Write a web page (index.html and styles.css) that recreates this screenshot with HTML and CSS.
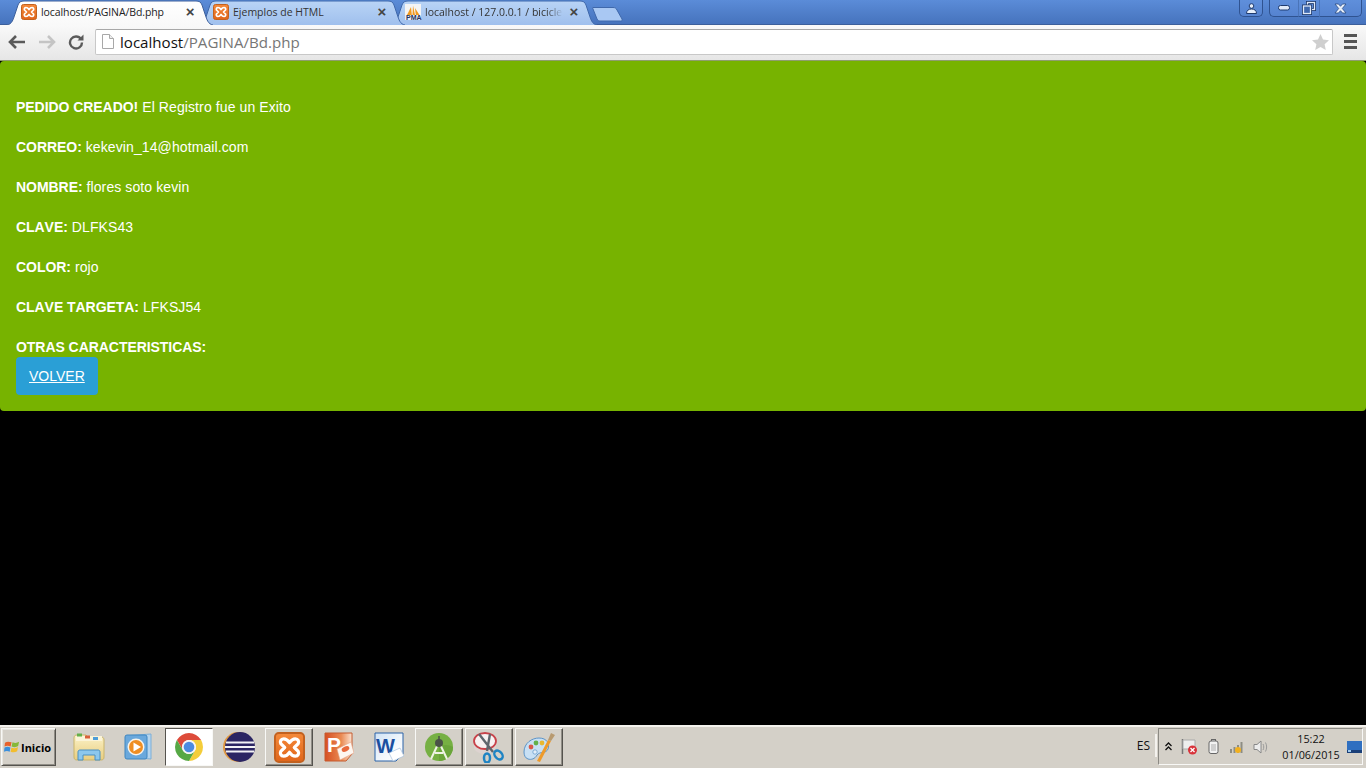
FILE: index.html
```html
<!DOCTYPE html>
<html lang="es">
<head>
<meta charset="utf-8">
<title>localhost/PAGINA/Bd.php</title>
<link rel="stylesheet" href="styles.css">
</head>
<body>
<svg class="defs" width="0" height="0" aria-hidden="true">
  <defs>
    <linearGradient id="tabOn" x1="0" y1="0" x2="0" y2="1"><stop offset="0" stop-color="#ffffff"/><stop offset="1" stop-color="#f8f8f8"/></linearGradient>
    <linearGradient id="tabOff" x1="0" y1="0" x2="0" y2="1"><stop offset="0" stop-color="#b9d4f6"/><stop offset="1" stop-color="#9cbdec"/></linearGradient>
    <linearGradient id="xamppG" x1="0" y1="0" x2="0" y2="1"><stop offset="0" stop-color="#f58a3a"/><stop offset="1" stop-color="#e0651a"/></linearGradient>
    <linearGradient id="pptG" x1="0" y1="0" x2="1" y2="0"><stop offset="0" stop-color="#d64f22"/><stop offset=".6" stop-color="#ea8a52"/><stop offset="1" stop-color="#fbe3d2"/></linearGradient>
    <linearGradient id="wordG" x1="0" y1="0" x2="1" y2="1"><stop offset="0" stop-color="#cfe2f5"/><stop offset=".6" stop-color="#f4f8fc"/><stop offset="1" stop-color="#ffffff"/></linearGradient>
    <linearGradient id="folderG" x1="0" y1="0" x2="0" y2="1"><stop offset="0" stop-color="#fbf2c8"/><stop offset="1" stop-color="#e9cd7f"/></linearGradient>
    <symbol id="tabShape" viewBox="0 0 206 25">
      <path d="M0 25C5 24 6 20 8 14L11 5C12 2 14 1 17 1L189 1C192 1 194 2 195 5L198 14C200 20 201 24 206 25V28H0Z"/>
    </symbol>
    <symbol id="xampp" viewBox="0 0 16 16">
      <rect x=".5" y=".5" width="15" height="15" rx="2" fill="url(#xamppG)" stroke="#c2611f"/>
      <path d="M5 3.500C3.500 3.500 3 5 3.500 6L5.500 8L3.500 10C3 11 3.500 12.500 5 12.500C6.500 12.500 7 12 8 10.500C9 12 9.500 12.500 11 12.500C12.500 12.500 13 11 12.500 10L10.500 8L12.500 6C13 5 12.500 3.500 11 3.500C9.500 3.500 9 4 8 5.500C7 4 6.500 3.500 5 3.500Z" fill="none" stroke="#fff" stroke-width="1.700" stroke-linejoin="round"/>
    </symbol>
  </defs>
</svg>

<header class="tabbar">
  <div class="tabs">
    <div class="tab tab-active">
      <svg class="tab-bg"><use href="#tabShape"/></svg>
      <svg class="favicon"><use href="#xampp"/></svg>
      <span class="tab-title">localhost/PAGINA/Bd.php</span>
      <span class="tab-close">×</span>
    </div>
    <div class="tab tab-mid">
      <svg class="tab-bg"><use href="#tabShape"/></svg>
      <svg class="favicon"><use href="#xampp"/></svg>
      <span class="tab-title">Ejemplos de HTML</span>
      <span class="tab-close">×</span>
    </div>
    <div class="tab tab-last">
      <svg class="tab-bg"><use href="#tabShape"/></svg>
      <svg class="favicon" viewBox="0 0 16 16">
        <rect width="16" height="16" fill="#f4f4f4"/>
        <path d="M2 11L6 3L6.800 11ZM7.500 11L8 1.500L10 11ZM10.800 11L10 4L14.500 11Z" fill="#f29a1f"/>
        <rect x="0" y="11" width="16" height="5" fill="#e9eef6"/>
      </svg>
      <span class="pma">PMA</span>
      <span class="tab-title tab-fade">localhost / 127.0.0.1 / bicicle</span>
      <span class="tab-close">×</span>
    </div>
    <svg class="newtab" width="32" height="16" viewBox="0 0 32 16">
      <path d="M1 1.500H21C23 1.500 24 2 25 4L30 13C30.500 14.500 30 15 28.500 15H8C6.500 15 6 14.500 5 13L1 3C.5 2 .5 1.500 1 1.500Z" fill="#a9c8f3" stroke="#3f68ab"/>
    </svg>
  </div>
  <div class="winctl">
    <div class="winbtn winbtn-user">
      <svg width="13" height="11" viewBox="0 0 13 11"><circle cx="6.500" cy="3" r="2.300" fill="#e8f0fb" stroke="#1e3a6e"/><path d="M1.500 10.500C1.500 7.500 3.500 6 6.500 6S11.500 7.500 11.500 10.500Z" fill="#e8f0fb" stroke="#1e3a6e"/></svg>
    </div>
    <div class="wingroup">
      <div class="winbtn winbtn-min"><svg width="12" height="6" viewBox="0 0 12 6"><rect x=".5" y=".5" width="11" height="4.500" rx="2" fill="#dfe9f8" stroke="#1e3a6e"/></svg></div>
      <div class="winbtn winbtn-max"><svg width="14" height="14" viewBox="0 0 14 14"><rect x="5.500" y="1.500" width="7" height="7" fill="none" stroke="#1e3a6e" stroke-width="3"/><rect x="5.500" y="1.500" width="7" height="7" fill="none" stroke="#dfe9f8" stroke-width="1.300"/><rect x="1.500" y="5" width="7" height="7.500" fill="#5d8ad2" stroke="#1e3a6e" stroke-width="3"/><rect x="1.500" y="5" width="7" height="7.500" fill="#3e68ae" stroke="#dfe9f8" stroke-width="1.300"/></svg></div>
      <div class="winbtn winbtn-close"><svg width="13" height="11" viewBox="0 0 13 11"><path d="M1 1H4.500L6.500 3.300L8.500 1H12L8.300 5.500L12 10H8.500L6.500 7.700L4.500 10H1L4.700 5.500Z" fill="#e8f0fb" stroke="#2a4a82" stroke-width=".8"/></svg></div>
    </div>
  </div>
</header>

<nav class="toolbar">
  <svg class="navicon" width="18" height="14" viewBox="0 0 18 14"><path d="M8 1L2 7L8 13M2.500 7H17" fill="none" stroke="#5a5a5a" stroke-width="2.600"/></svg>
  <svg class="navicon navicon-fwd" width="18" height="14" viewBox="0 0 18 14"><path d="M10 1L16 7L10 13M15.500 7H1" fill="none" stroke="#c4c4c4" stroke-width="2.600"/></svg>
  <svg class="navicon navicon-reload" width="16" height="16" viewBox="0 0 16 16"><path d="M13 5.200A6 6 0 1 0 14 8.500" fill="none" stroke="#5a5a5a" stroke-width="2.400"/><path d="M9.500 6.500H15.500V.5Z" fill="#5a5a5a"/></svg>
  <div class="omnibox">
    <svg class="pageicon" width="12" height="15" viewBox="0 0 12 15"><path d="M.5.5H7.500L11.500 4.500V14.500H.5Z" fill="#fff" stroke="#a8a8a8"/><path d="M7.500.5V4.500H11.500" fill="#eee" stroke="#a8a8a8"/></svg>
    <span class="url"><span class="url-host">localhost</span>/PAGINA/Bd.php</span>
    <svg class="star" width="17" height="16" viewBox="0 0 17 16"><path d="M8.500 0L11 5.500L17 6.200L12.600 10.200L13.800 16L8.500 13L3.200 16L4.400 10.200L0 6.200L6 5.500Z" fill="#cfcfcf"/></svg>
  </div>
  <div class="menu"><i></i><i></i><i></i></div>
</nav>

<main class="page">
  <section class="panel">
    <p><b>PEDIDO CREADO!</b> El Registro fue un Exito</p>
    <p><b>CORREO:</b> kekevin_14@hotmail.com</p>
    <p><b>NOMBRE:</b> flores soto kevin</p>
    <p><b>CLAVE:</b> DLFKS43</p>
    <p><b>COLOR:</b> rojo</p>
    <p><b>CLAVE TARGETA:</b> LFKSJ54</p>
    <p><b>OTRAS CARACTERISTICAS:</b></p>
    <a class="back" href="#">VOLVER</a>
  </section>
</main>

<footer class="taskbar">
  <div class="start">
    <svg width="17" height="16" viewBox="0 0 18 17"><path d="M1 4C3 2.500 5 2.500 8 3.500L7 8C4.500 7 3 7 .5 8Z" fill="#e8622c"/><path d="M9 3.500C11.500 4.500 13.500 4.500 16 3L15 7.500C13 9 10.500 9 8 8Z" fill="#86b83a"/><path d="M.5 9C3 8 4.500 8 6.800 9L6 13.500C4 12.500 2 12.500 0 13.500Z" fill="#3a8fdc"/><path d="M7.800 9.200C10 10 12.500 10 14.800 8.500L14 13C11.500 14.500 9.500 14.500 7 13.500Z" fill="#f2bd2e"/></svg>
    <span>Inicio</span>
  </div>
  <div class="apps">
    <div class="app">
      <svg width="32" height="30" viewBox="0 0 32 30"><path d="M1 6C1 4 2 3 4 3H13L15 5H28C30 5 31 6 31 8V25C31 27 30 28 28 28H4C2 28 1 27 1 25Z" fill="url(#folderG)" stroke="#c9b46a"/><rect x="3" y="4" width="26" height="5" fill="#fbf4d8"/><rect x="4" y="1.500" width="5" height="3" fill="#63b04a"/><rect x="12" y="3.500" width="5" height="3" fill="#d9603a"/><rect x="20" y="5" width="5" height="3" fill="#4d9dd8"/><path d="M5 28V20C5 18.500 6 18 7 18H25C26 18 27 18.500 27 20V28H22V23H10V28Z" fill="#8cc7ec" stroke="#4a90c2"/></svg>
    </div>
    <div class="app">
      <svg width="30" height="30" viewBox="0 0 30 30"><path d="M6 3.500L27 2V27L6 25.500Z" fill="#b4d4ee" stroke="#7cafd8"/><rect x="1" y="3" width="22" height="24" rx="2" fill="#6aa8dc" stroke="#3f86c0"/><circle cx="12" cy="15" r="8.500" fill="#f8f4ec"/><circle cx="12" cy="15" r="7" fill="#ef8e22"/><path d="M9.500 10.500L17 15L9.500 19.500Z" fill="#fff"/></svg>
    </div>
    <div class="app app-pressed">
      <svg width="30" height="30" viewBox="0 0 30 30"><path d="M27.100 8A14 14 0 0 0 2.900 8L9 18.500A7 7 0 0 1 15 8Z" fill="#dd4b3a"/><path d="M27.100 8A14 14 0 0 1 15 29L21 18.500A7 7 0 0 0 15 8Z" fill="#f4cd3a"/><path d="M2.900 8A14 14 0 0 0 15 29L21 18.500A7 7 0 0 1 9 18.500Z" fill="#56a845"/><circle cx="15" cy="15" r="7" fill="#f4f4f4"/><circle cx="15" cy="15" r="5.300" fill="#4c8be0"/></svg>
    </div>
    <div class="app">
      <svg width="32" height="32" viewBox="0 0 32 32"><circle cx="15" cy="16" r="15" fill="#e09a45"/><circle cx="17" cy="16" r="15" fill="#2b2563"/><path d="M3 11.500H31M2 16H32M3 20.500H31" stroke="#f2f2f6" stroke-width="2"/></svg>
    </div>
    <div class="app app-raised">
      <svg width="31" height="31"><use href="#xampp"/></svg>
    </div>
    <div class="app">
      <svg width="30" height="30" viewBox="0 0 30 30"><path d="M1 1H28V22L22 29H1Z" fill="url(#pptG)" stroke="#c55a2e"/><text x="3" y="20" class="icon-letter">P</text><path d="M13 17L27 10L30 21L16 28Z" fill="#fdf6f0" stroke="#e4a080" stroke-width=".6"/><ellipse cx="21.500" cy="17" rx="4" ry="2.500" fill="#e8693c" transform="rotate(-25 21.500 17)"/></svg>
    </div>
    <div class="app">
      <svg width="30" height="30" viewBox="0 0 30 30"><path d="M1 1H29V22L22 29H1Z" fill="url(#wordG)" stroke="#2a62a8"/><text x="2" y="21" class="icon-letter icon-letter-w">W</text><path d="M15 21L26 16L30 24L19 29Z" fill="#fff" stroke="#9cb8d8" stroke-width=".6"/></svg>
    </div>
    <div class="app app-raised">
      <svg width="28" height="28" viewBox="0 0 28 28"><circle cx="14" cy="14" r="14" fill="#76b043"/><path d="M14 14A14 14 0 0 1 28 14A14 14 0 0 1 14 28Z" fill="#6aa53a"/><path d="M14 9L6 26M14 9L22 26M10 20H18" fill="none" stroke="#eef3e4" stroke-width="2"/><circle cx="14" cy="10" r="4" fill="#4a5247"/><path d="M14 3V7" stroke="#4a5247" stroke-width="1.500"/></svg>
    </div>
    <div class="app app-raised">
      <svg width="32" height="32" viewBox="0 0 32 32"><path d="M1 10V16C1 20 6 23 12 23S23 20 23 16V10Z" fill="#ddd3d0"/><ellipse cx="12" cy="10" rx="11" ry="8" fill="#f7f2f2" stroke="#c8424a" stroke-width="1.800"/><path d="M6 3L20 21M17 3L14 20" stroke="#5f666d" stroke-width="2.400"/><ellipse cx="25.500" cy="24" rx="3.500" ry="5" transform="rotate(-40 25.500 24)" fill="none" stroke="#1f84c4" stroke-width="2.500"/><ellipse cx="14" cy="27" rx="3" ry="4.500" fill="none" stroke="#1f84c4" stroke-width="2.500"/></svg>
    </div>
    <div class="app app-raised">
      <svg width="33" height="31" viewBox="0 0 33 31"><path d="M1 20C1 11 9 6 16 6C24 6 27 12 25 17C23 22 17 19 14 23C12 27 8 28 5 27C2 26 1 23 1 20Z" fill="#c8e0f4" stroke="#5c94c8"/><circle cx="8" cy="15" r="2.400" fill="#d9584a"/><circle cx="13" cy="11" r="2.400" fill="#62b04a"/><circle cx="19" cy="11" r="2.400" fill="#e8b830"/><circle cx="12" cy="20" r="2.200" fill="#e4eff8" stroke="#5c94c8" stroke-width=".7"/><path d="M14 29L25 8L28 9L17 30Z" fill="#ee9a2a"/><path d="M25 8L28 1L32 3L28 9Z" fill="#b89a70"/></svg>
    </div>
  </div>
  <div class="tray-wrap">
    <span class="lang">ES</span>
    <div class="tray">
      <svg class="tray-up" width="7" height="9" viewBox="0 0 7 9"><path d="M.5 4L3.500 1L6.500 4M.5 8L3.500 5L6.500 8" fill="none" stroke="#111" stroke-width="1.300"/></svg>
      <svg class="tray-i" width="17" height="17" viewBox="0 0 17 17"><path d="M1.500 1V16" stroke="#777" stroke-width="1.500"/><path d="M2 2H14V11H2Z" fill="#eee" stroke="#aaa"/><circle cx="11.500" cy="12" r="4.500" fill="#d8323a"/><path d="M9.500 10L13.500 14M13.500 10L9.500 14" stroke="#fff" stroke-width="1.300"/></svg>
      <svg class="tray-i" width="11" height="15" viewBox="0 0 11 15"><rect x="3.500" y=".5" width="4" height="2" fill="#ddd" stroke="#666"/><rect x="1" y="2" width="9" height="12.500" rx="2" fill="#f2f2f2" stroke="#666"/><rect x="3" y="5" width="5" height="7" fill="#cfcfcf"/></svg>
      <svg class="tray-i tray-signal" width="16" height="13" viewBox="0 0 16 13"><path d="M1 9H3V13H1ZM4.500 7H6.500V13H4.500ZM8 5H10V13H8ZM11.500 2H13.500V13H11.500Z" fill="#8d8d83"/><circle cx="9" cy="10" r="3" fill="#f2b01e"/></svg>
      <svg class="tray-i tray-sound" width="16" height="14" viewBox="0 0 16 14"><path d="M1 4.500H4L8 1V13L4 9.500H1Z" fill="#ececec" stroke="#888"/><path d="M10 4C11 6 11 8 10 10M12.500 2.500C14 5.500 14 8.500 12.500 11.500" fill="none" stroke="#9a9a9a"/></svg>
      <div class="clock"><div>15:22</div><div>01/06/2015</div></div>
      <svg class="desktop" width="15" height="12" viewBox="0 0 15 12"><rect width="15" height="12" fill="#2f6fc0"/><rect y="9" width="15" height="3" fill="#1a3f78"/><rect x="1" y="9" width="3" height="2" fill="#9cc8ee"/></svg>
    </div>
  </div>
</footer>
</body>
</html>
```
FILE: styles.css
```css
* { box-sizing: border-box; }
html, body { margin: 0; padding: 0; height: 100%; overflow: hidden; }
body {
  width: 1366px; height: 768px;
  display: flex; flex-direction: column;
  font-family: "Liberation Sans", Arial, sans-serif;
  background: #000;
}
.defs { position: absolute; }

/* Tab strip */
.tabbar {
  height: 25px; flex: none;
  display: flex; justify-content: space-between;
  background: linear-gradient(#5b8cd8, #4673bd);
  border-bottom: 1px solid #3c5f9b;
}
.tabs { display: flex; align-items: flex-start; padding-left: 7px; }
.tab {
  position: relative;
  width: 206px; height: 25px; flex: none;
  margin-right: -14px;
  display: flex; align-items: center;
  padding: 0 0 2px 14px;
  font-family: "Open Sans", sans-serif;
  font-size: 10.500px; color: #333;
}
.tab-bg { position: absolute; left: 0; top: 0; width: 206px; height: 25px; }
.tab-active { z-index: 3; color: #222; letter-spacing: -.09px; }
.tab-active .tab-bg { fill: url(#tabOn); stroke: #3c5f9b; }
.tab-mid { z-index: 2; }
.tab-last { z-index: 1; }
.tab-mid .tab-bg, .tab-last .tab-bg { fill: url(#tabOff); stroke: #3f68ab; }
.favicon { position: relative; width: 16px; height: 16px; flex: none; }
.pma {
  position: absolute; left: 15px; top: 14px;
  font: bold 7px/7px "Liberation Sans", sans-serif; color: #23335c;
}
.tab-title {
  position: relative; margin-left: 4px; width: 138px; flex: none;
  white-space: nowrap; overflow: hidden;
}
.tab-fade {
  -webkit-mask-image: linear-gradient(90deg, #000 88%, transparent);
  mask-image: linear-gradient(90deg, #000 88%, transparent);
}
.tab-close {
  position: relative; margin-left: 6px; width: 10px; text-align: center; flex: none;
  font: bold 15px/15px "Liberation Sans", sans-serif; color: #444;
}
.newtab { margin: 6px 0 0 9px; flex: none; position: relative; }

/* Window controls */
.winctl { display: flex; align-items: flex-start; padding-right: 4px; gap: 6px; }
.wingroup { display: flex; }
.winbtn {
  height: 17px; display: flex; align-items: center; justify-content: center;
  background: linear-gradient(#5f8fdb, #5583d0);
  border: 1px solid #2f5391; border-top: 0;
}
.winbtn-user { width: 24px; border-radius: 0 0 5px 5px; }
.winbtn-min { width: 29px; border-radius: 0 0 0 5px; border-right: 0; }
.winbtn-max { width: 21px; border-right: 0; border-left-color: #4a74b8; }
.winbtn-close { width: 43px; border-radius: 0 0 5px 0; border-left-color: #4a74b8; }

/* Toolbar */
.toolbar {
  height: 36px; flex: none;
  display: flex; align-items: center;
  padding: 0 8px 2px 8px;
  background: linear-gradient(#f9f9f9, #e6e6e6);
  border-bottom: 1px solid #8f9c70;
}
.navicon { flex: none; margin-right: 12px; }
.navicon-reload { margin-right: 11px; }
.omnibox {
  flex: 1; height: 26px; margin-right: 11px;
  display: flex; align-items: center;
  padding: 0 3px 0 6px;
  background: #fff;
  border: 1px solid #c8c8c8; border-top-color: #a8a8a8;
  border-radius: 2px;
  font-family: "Open Sans", sans-serif; font-size: 15.100px; color: #767676;
}
.pageicon { flex: none; margin-right: 6px; }
.url { flex: 1; white-space: nowrap; }
.url-host { color: #111; }
.star { flex: none; }
.menu { display: flex; flex-direction: column; gap: 3px; width: 13px; margin-right: 1px; }
.menu i { display: block; height: 3px; background: #555; }

/* Page */
.page { height: 664px; flex: none; background: #000; }
.panel {
  height: 350px;
  padding: 16px 16px 15px;
  background: #77b300;
  border-radius: 4px;
  color: #fff;
  font-size: 14px; line-height: 20px;
  font-kerning: none;
}
.panel p { margin: 20px 0 0; letter-spacing: .1px; }
.panel b { letter-spacing: -.05px; }
.back {
  display: inline-block; height: 38px; padding: 9px 13px;
  background: #2a9fd6; border-radius: 4px;
  color: #fff; text-decoration: underline;
  font-kerning: normal;
}

/* Taskbar */
.taskbar {
  height: 43px; flex: none;
  display: flex; align-items: stretch;
  padding: 1px 3px 2px 1px;
  background: #d4d0c8;
  border-top: 2px solid #f4f2ee;
}
.start {
  width: 55px; margin-right: 9px;
  display: flex; align-items: center; gap: 0;
  padding-left: 2px;
  font: bold 11px "Open Sans", sans-serif; color: #000;
  border: 1px solid; border-color: #f8f8f6 #55534e #55534e #f8f8f6;
  box-shadow: inset 1px 1px 0 #e8e6e0, inset -1px -1px 0 #908d86;
}
.apps { display: flex; gap: 2px; }
.app { width: 48px; display: flex; align-items: center; justify-content: center; }
.app-raised { border: 1px solid; border-color: #f8f8f6 #55534e #55534e #f8f8f6; box-shadow: inset -1px -1px 0 #908d86; }
.app-pressed { background: #fff; border: 1px solid; border-color: #55534e #f8f8f6 #f8f8f6 #55534e; }
.icon-letter { font: bold 21px "Liberation Sans", sans-serif; fill: #fff; }
.icon-letter-w { font-size: 20px; fill: #1a4fa0; }
.tray-wrap { margin-left: auto; display: flex; align-items: stretch; }
.lang {
  width: 26px; margin: 6px 1px 9px 0; padding-right: 5px;
  display: flex; align-items: center; justify-content: flex-end;
  font-family: "Open Sans", sans-serif; font-size: 12px; color: #111;
  border-right: 2px solid #f4f2ee;
}
.tray {
  width: 205px; margin-bottom: 1px; display: flex; align-items: center;
  padding-left: 6px; border: 1px solid; border-color: #8c8a84 #f8f8f6 #f8f8f6 #8c8a84;
}
.tray-up { margin-right: 9px; }
.tray-i { flex: none; margin-right: 10px; }
.tray-signal { margin-right: 8px; }
.tray-sound { margin-right: 11px; }
.clock {
  width: 62px; text-align: center; font-family: "Open Sans", sans-serif; font-size: 10.800px; line-height: 16px; color: #111;
}
.desktop { margin-left: 5px; }
```
